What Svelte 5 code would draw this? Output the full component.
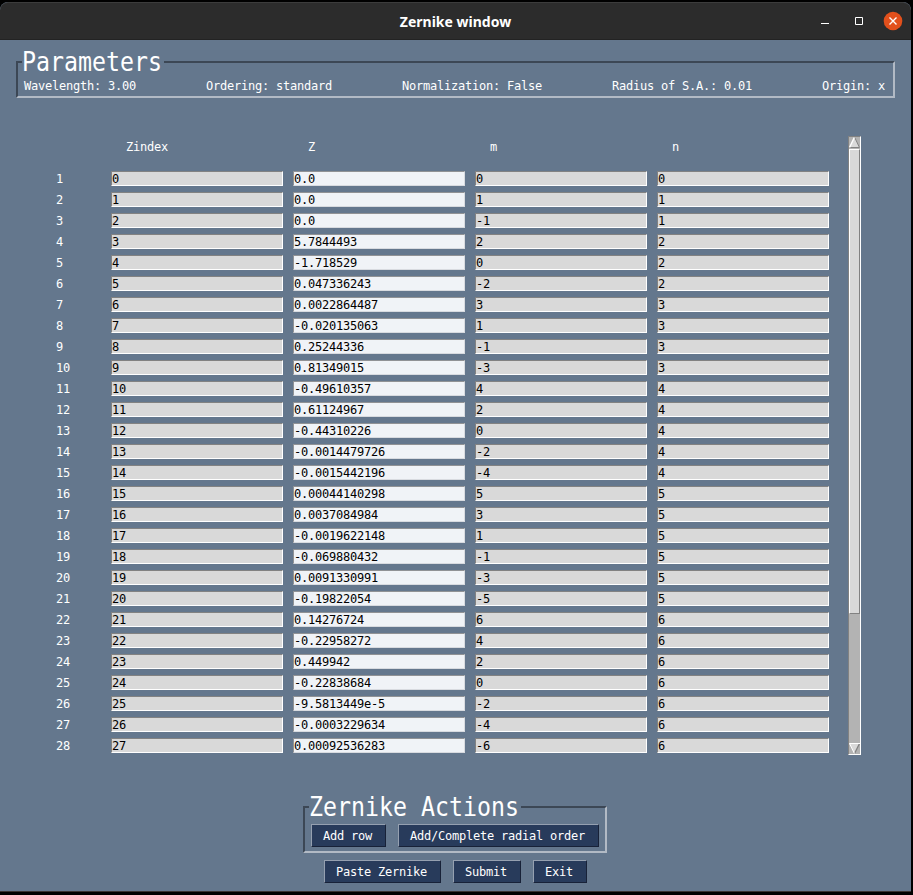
<script>
  const params = [
    'Wavelength: 3.00',
    'Ordering: standard',
    'Normalization: False',
    'Radius of S.A.: 0.01',
    'Origin: x'
  ];
  const columns = ['Zindex', 'Z', 'm', 'n'];
  const rows = [
    ['0.0', 0, 0], ['0.0', 1, 1], ['0.0', -1, 1], ['5.7844493', 2, 2],
    ['-1.718529', 0, 2], ['0.047336243', -2, 2], ['0.0022864487', 3, 3],
    ['-0.020135063', 1, 3], ['0.25244336', -1, 3], ['0.81349015', -3, 3],
    ['-0.49610357', 4, 4], ['0.61124967', 2, 4], ['-0.44310226', 0, 4],
    ['-0.0014479726', -2, 4], ['-0.0015442196', -4, 4], ['0.00044140298', 5, 5],
    ['0.0037084984', 3, 5], ['-0.0019622148', 1, 5], ['-0.069880432', -1, 5],
    ['0.0091330991', -3, 5], ['-0.19822054', -5, 5], ['0.14276724', 6, 6],
    ['-0.22958272', 4, 6], ['0.449942', 2, 6], ['-0.22838684', 0, 6],
    ['-9.5813449e-5', -2, 6], ['-0.0003229634', -4, 6], ['0.00092536283', -6, 6]
  ].map(([z, m, n], i) => [i, z, m, n]);
</script>

<div class="screen">
  <div class="window">
    <header>
      <span class="title">Zernike window</span>
      <div class="controls">
        <svg width="12" height="12" viewBox="0 0 12 12"><path d="M2 8.5h8" stroke="#fff" fill="none" /></svg>
        <svg width="12" height="12" viewBox="0 0 12 12"><path d="M2.5 2.5h7v7h-7z" stroke="#fff" fill="none" /></svg>
        <svg width="20" height="20" viewBox="0 0 20 20">
          <circle cx="10" cy="10" r="9.3" fill="#e2501c" />
          <path d="M6.5 6.5l7 7M13.5 6.5l-7 7" stroke="#fff" stroke-width="1.4" fill="none" />
        </svg>
      </div>
    </header>

    <main>
      <section class="frame params">
        <h2 class="w10"><span>Parameters</span></h2>
        <div class="values">
          {#each params as p}<span>{p}</span>{/each}
        </div>
      </section>

      <section class="table">
        <div class="grid">
          <div class="row heads">
            <span class="num"></span>
            {#each columns as c}<span class="head">{c}</span>{/each}
          </div>
          {#each rows as row, i}
            <div class="row">
              <span class="num">{i + 1}</span>
              {#each row as v, c}<div class="cell" class:editable={c === 1}>{v}</div>{/each}
            </div>
          {/each}
        </div>
        <div class="scrollbar">
          <svg width="11" height="12" viewBox="0 0 11 12">
            <path d="M5.5 .5L11 11H0z" fill="#d9d9d9" />
            <path d="M5.7 .5L10.5 10.5H0" stroke="#828282" fill="none" />
            <path d="M5.3 .5L.5 10.5" stroke="#fff" stroke-width="1.4" fill="none" />
          </svg>
          <div class="thumb"></div>
          <div class="trough"></div>
          <svg width="11" height="11" viewBox="0 0 11 11">
            <path d="M0 0H11L5.5 10.5z" fill="#d9d9d9" />
            <path d="M10.5 .5L5.7 10.3" stroke="#828282" stroke-width="1.3" fill="none" />
            <path d="M11 .5H.5L5.3 10.3" stroke="#fff" fill="none" />
          </svg>
        </div>
      </section>

      <section class="frame actions">
        <h2 class="w15"><span>Zernike Actions</span></h2>
        <div class="buttons">
          <button>Add row</button>
          <button>Add/Complete radial order</button>
        </div>
      </section>
      <div class="buttons bottom">
        <button>Paste Zernike</button>
        <button>Submit</button>
        <button>Exit</button>
      </div>
    </main>
  </div>
</div>

<style>
  .screen {
    box-sizing: border-box;
    width: 913px;
    height: 895px;
    padding: 2px 2px 2px 0;
    background: #000;
    overflow: hidden;
  }
  .window {
    box-sizing: border-box;
    height: 890px;
    border-radius: 8px 8px 0 0;
    background: #64778d;
    overflow: hidden;
    border-bottom: 1px solid #3a3433;
  }
  header {
    box-sizing: border-box;
    height: 38px;
    display: grid;
    grid-template-columns: 1fr auto 1fr;
    align-items: center;
    background: #2c2c2c;
    border-top: 1px solid #3c3c3c;
    border-bottom: 1px solid #232323;
    border-radius: 8px 8px 0 0;
  }
  .title {
    grid-column: 2;
    color: #fff;
    font: bold 14px/20px 'Noto Sans', sans-serif;
    padding-top: 1px;
  }
  .controls {
    display: flex;
    justify-content: flex-end;
    align-items: center;
    gap: 22px;
    padding-right: 8px;
  }
  .controls svg:last-child {
    margin-left: -4px;
  }
  svg {
    display: block;
    flex: none;
  }
  main {
    display: flex;
    flex-direction: column;
    font: 12px/15px 'DejaVu Sans Mono', monospace;
    letter-spacing: -0.224px;
    color: #fff;
    white-space: nowrap;
  }
  .frame {
    box-sizing: border-box;
    border: 2px solid;
    border-color: #3c4755 #b2bac5 #b2bac5 #3c4755;
  }
  h2 {
    margin: -15px 0 0 4px;
    height: 30px;
    background: #64778d;
    font: 27px/28px 'DejaVu Sans Mono', monospace;
    letter-spacing: 0;
  }
  h2 span {
    display: inline-block;
    transform: scaleX(0.861);
    transform-origin: 0 0;
  }
  .w10 {
    width: 142px;
  }
  .w15 {
    width: 212px;
  }
  .params {
    margin: 21px 0 0 16px;
    width: 879px;
    height: 37px;
  }
  .values {
    display: flex;
    gap: 70px;
    padding: 1px 0 0 6px;
  }
  .table {
    display: flex;
    margin: 38px 0 0 56px;
    height: 619px;
  }
  .grid {
    display: flex;
    flex-direction: column;
    gap: 6px;
    width: 773px;
  }
  .row {
    display: flex;
    gap: 10px;
    height: 15px;
  }
  .heads {
    padding: 3px 0 11px;
  }
  .num {
    width: 45px;
    padding-top: 1px;
  }
  .head {
    box-sizing: border-box;
    width: 172px;
    padding: 1px 0 0 15px;
  }
  .cell {
    box-sizing: border-box;
    width: 172px;
    height: 15px;
    border: 1px solid;
    border-color: #828282 #fff #fff #828282;
    background: #d9d9d9;
    color: #000;
    line-height: 15px;
  }
  .editable {
    background: #f0f3f7;
    border-color: #909295 #d8dbe0 #d8dbe0 #909295;
  }
  .scrollbar {
    box-sizing: border-box;
    display: flex;
    flex-direction: column;
    margin-left: 19px;
    width: 13px;
    border: 1px solid;
    border-color: #828282 #fff #fff #828282;
    background: #b3b3b3;
  }
  .thumb {
    box-sizing: border-box;
    height: 465px;
    border: 1px solid;
    border-color: #fff #828282 #828282 #fff;
    background: #d9d9d9;
  }
  .trough {
    flex: 1;
  }
  .actions {
    margin: 51px 0 0 303px;
    width: 304px;
    height: 47px;
  }
  .buttons {
    display: flex;
    gap: 12px;
    padding: 1px 0 0 6px;
  }
  .bottom {
    padding: 7px 0 0 324px;
  }
  button {
    box-sizing: border-box;
    height: 23px;
    margin: 0;
    padding: 2px 13px 0 11px;
    border: 1px solid;
    border-color: #95a0b0 #182238 #182238 #95a0b0;
    border-radius: 0;
    background: #283b5b;
    color: #fff;
    font: inherit;
    letter-spacing: inherit;
  }
</style>
